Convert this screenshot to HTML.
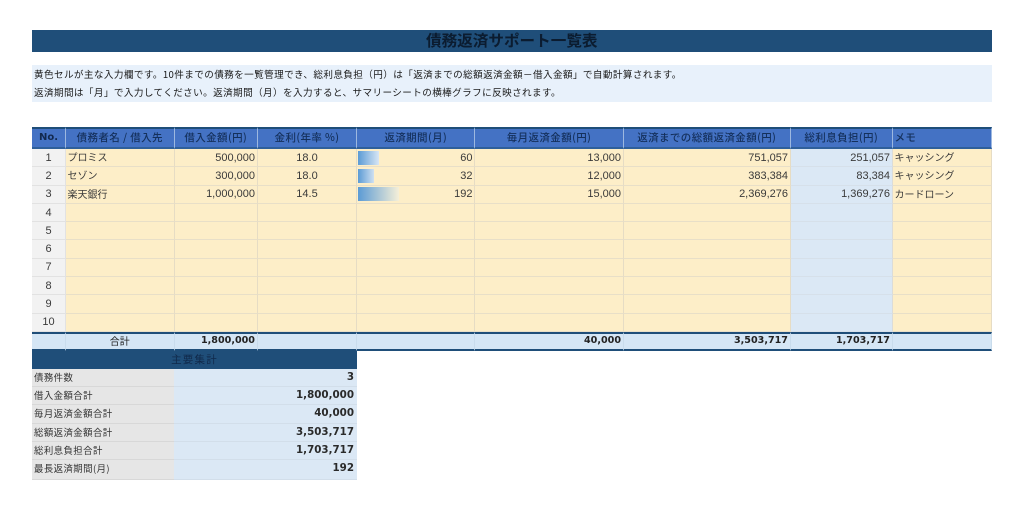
<!DOCTYPE html>
<html lang="ja"><head><meta charset="utf-8"><style>
html,body{margin:0;padding:0;background:#fff;width:1024px;height:506px;overflow:hidden}
body{font-family:"DejaVu Sans","Noto Sans CJK JP",sans-serif;color:#333;position:relative}
.a{position:absolute;box-sizing:border-box;white-space:nowrap}
.j{font-family:"Noto Sans CJK JP",sans-serif}
#wrap{position:absolute;left:0;top:0;width:1024px;height:506px;filter:blur(.35px)}
table{position:absolute;border-collapse:separate;border-spacing:0;table-layout:fixed;left:32px;top:127px;width:959.5px}
td,th{box-sizing:border-box;padding:0 1.5px 0 2px;font-family:"Liberation Sans",sans-serif;font-size:11px;overflow:hidden;white-space:nowrap;border-right:1px solid #e6dcc4;border-bottom:1px solid #e8dfc8;background:#fdeec8;font-weight:normal;color:#3a3a3a}
tr{height:18.3px}
th{background:#4472c4;color:#14305c;font-family:"Noto Sans CJK JP",sans-serif;font-size:10.5px;letter-spacing:.4px;border-top:2px solid #1f4e79;border-bottom:2px solid #2f5f9a;border-right:1px solid #9db8e0;height:22px;font-weight:500;padding-bottom:1px}
th.n{font-family:"DejaVu Sans",sans-serif;font-weight:bold;font-size:10px;letter-spacing:0;color:#12294f}
th.l{text-align:left}
td.r{text-align:right}
td.c{text-align:center}
td.no{background:#f2f2f2;text-align:center;border-color:#e2e2e2}
td.j{font-family:"Noto Sans CJK JP",sans-serif;font-size:10px;padding-bottom:2px}
td.b{background:#dbe8f5;border-right-color:#dcdcd8;border-bottom-color:#d6e0ea}
tr.t{height:19px}
tr.t td{background:#d5e6f5;font-family:"DejaVu Sans",sans-serif;font-weight:bold;color:#222;border-top:2px solid #1f4e79;border-bottom:2px solid #1f4e79;border-right:1px solid #c9dcec;height:19px;font-size:9.6px;line-height:11px;padding-bottom:2px}
.bar{position:absolute;left:358px;height:14px}
.s{left:32px;width:325px;height:18.2px;display:flex}
.s div{box-sizing:border-box;height:100%;border-bottom:1px solid #d8d8d8}
.s .k{width:142px;background:#e6e6e6;font-family:"Noto Sans CJK JP",sans-serif;font-size:9.4px;letter-spacing:.45px;padding:0 0 0 2px;line-height:17px;color:#333}
.s .v{width:183px;background:#dbe8f5;font-weight:bold;font-size:10.3px;text-align:right;padding-right:3px;line-height:17px;color:#2a2a2a;border-bottom-color:#d2deea}
</style></head><body><div id="wrap">
<div class="a j" style="left:32px;top:30px;width:959.5px;height:22px;background:#1f4e79;color:#0b1c30;font-size:15.6px;font-weight:700;text-align:center;line-height:21px">債務返済サポート一覧表</div>
<div class="a" style="left:32px;top:65px;width:959.5px;height:37px;background:#e8f1fb"></div>
<div class="a j" style="left:34px;top:65px;font-size:9.6px;line-height:18px;color:#1a1a1a;letter-spacing:.39px">黄色セルが主な入力欄です。10件までの債務を一覧管理でき、総利息負担（円）は「返済までの総額返済金額－借入金額」で自動計算されます。</div>
<div class="a j" style="left:34px;top:83px;font-size:9.6px;line-height:18px;color:#1a1a1a;letter-spacing:.39px">返済期間は「月」で入力してください。返済期間（月）を入力すると、サマリーシートの横棒グラフに反映されます。</div>
<table>
<colgroup><col style="width:33.5px"><col style="width:109px"><col style="width:83px"><col style="width:99.5px"><col style="width:118px"><col style="width:148.5px"><col style="width:167px"><col style="width:102px"><col style="width:99px"></colgroup>
<tr><th class="n">No.</th><th>債務者名 / 借入先</th><th>借入金額(円)</th><th>金利(年率 %)</th><th>返済期間(月)</th><th>毎月返済金額(円)</th><th>返済までの総額返済金額(円)</th><th>総利息負担(円)</th><th class="l">メモ</th></tr>
<tr><td class="no">1</td><td class="j">プロミス</td><td class="r">500,000</td><td class="c">18.0</td><td class="r">60</td><td class="r">13,000</td><td class="r">751,057</td><td class="r b">251,057</td><td class="j">キャッシング</td></tr>
<tr><td class="no">2</td><td class="j">セゾン</td><td class="r">300,000</td><td class="c">18.0</td><td class="r">32</td><td class="r">12,000</td><td class="r">383,384</td><td class="r b">83,384</td><td class="j">キャッシング</td></tr>
<tr><td class="no">3</td><td class="j">楽天銀行</td><td class="r">1,000,000</td><td class="c">14.5</td><td class="r">192</td><td class="r">15,000</td><td class="r">2,369,276</td><td class="r b">1,369,276</td><td class="j">カードローン</td></tr>
<tr><td class="no">4</td><td></td><td></td><td></td><td></td><td></td><td></td><td class="b"></td><td></td></tr>
<tr><td class="no">5</td><td></td><td></td><td></td><td></td><td></td><td></td><td class="b"></td><td></td></tr>
<tr><td class="no">6</td><td></td><td></td><td></td><td></td><td></td><td></td><td class="b"></td><td></td></tr>
<tr><td class="no">7</td><td></td><td></td><td></td><td></td><td></td><td></td><td class="b"></td><td></td></tr>
<tr><td class="no">8</td><td></td><td></td><td></td><td></td><td></td><td></td><td class="b"></td><td></td></tr>
<tr><td class="no">9</td><td></td><td></td><td></td><td></td><td></td><td></td><td class="b"></td><td></td></tr>
<tr><td class="no">10</td><td></td><td></td><td></td><td></td><td></td><td></td><td class="b"></td><td></td></tr>
<tr class="t"><td></td><td class="j c" style="font-weight:normal;font-size:10px;font-family:'Noto Sans CJK JP',sans-serif">合計</td><td class="r">1,800,000</td><td></td><td></td><td class="r">40,000</td><td class="r">3,503,717</td><td class="r">1,703,717</td><td></td></tr>
</table>
<div class="a bar" style="top:151px;width:21px;background:linear-gradient(90deg,#5b9bd5,#d8e6f4)"></div>
<div class="a bar" style="top:169px;width:16px;background:linear-gradient(90deg,#5b9bd5,#cfe0f1)"></div>
<div class="a bar" style="top:187px;width:41px;background:linear-gradient(90deg,#5b9bd5,#f5efd8)"></div>
<div class="a j" style="left:32px;top:351px;width:325px;height:18px;background:#1f4e79;color:#10294a;font-size:10.5px;text-align:center;line-height:17px;letter-spacing:1.2px">主要集計</div>
<div class="a s" style="top:369px"><div class="k">債務件数</div><div class="v">3</div></div>
<div class="a s" style="top:387.2px"><div class="k">借入金額合計</div><div class="v">1,800,000</div></div>
<div class="a s" style="top:405.4px"><div class="k">毎月返済金額合計</div><div class="v">40,000</div></div>
<div class="a s" style="top:423.6px"><div class="k">総額返済金額合計</div><div class="v">3,503,717</div></div>
<div class="a s" style="top:441.8px"><div class="k">総利息負担合計</div><div class="v">1,703,717</div></div>
<div class="a s" style="top:460px;height:19.5px"><div class="k">最長返済期間(月)</div><div class="v">192</div></div>
</div></body></html>
